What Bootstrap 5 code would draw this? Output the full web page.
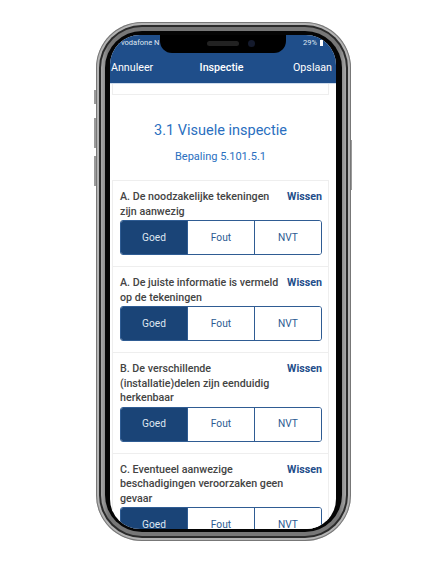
<!DOCTYPE html>
<html lang="nl">
<head>
<meta charset="utf-8">
<title>Inspectie</title>
<link href="https://cdn.jsdelivr.net/npm/bootstrap@5.3.0/dist/css/bootstrap.min.css" rel="stylesheet">
<style>
html,body{height:100%;background:#fff;overflow:hidden}
body{font-family:Roboto,"Liberation Sans",sans-serif}
.stage{width:433px;height:577px;padding:22px 0 0 96px}
.phone-shell{width:255px;height:519px;border-radius:46px;padding:3px;background:#b4b4b4;box-shadow:inset 0 0 0 1px #777;position:relative}
.ring-dark{width:100%;height:100%;border-radius:43px;background:#2b2b2b;padding:2px}
.ring-gray{width:100%;height:100%;border-radius:41px;background:linear-gradient(90deg,#a8a8a8,#777 3%,#777 97%,#a8a8a8);padding:4px}
.phone-inner{width:100%;height:100%;border-radius:37px;background:#050505;padding:4px 6px 3px 5px}
.phone-screen{width:100%;height:100%;border-radius:30px;background:#fff;overflow:hidden;position:relative}
.side-key{position:absolute;width:2px;background:#9a9a9a}
.key-a{left:-2px;top:68px;height:14px}.key-b{left:-2px;top:96px;height:30px}.key-c{left:-2px;top:134px;height:30px}
.key-d{right:-1px;width:1px;top:118px;height:50px}
.notch{position:absolute;top:0;left:50px;width:126px;height:18px;background:#000;border-radius:0 0 12px 12px;z-index:3}
.notch-speaker{position:absolute;top:6px;left:47px;width:32px;height:5px;border-radius:3px;background:#222}
.notch-cam{position:absolute;top:5px;left:88px;width:7px;height:7px;border-radius:50%;background:#141a2c}
.app-bar{background:#1f4e8a;color:#fff;height:49px;border-bottom:1px solid #cfdcec}
.status-row{height:15px;font-size:7.5px;padding:0 13px 0 6px;color:#dfe7f1}
.signal-mark{display:inline-block;width:3px;height:3px;background:#9fb6d3;margin-right:2px}
.battery-box{display:inline-block;width:3px;height:6px;background:#fff;margin-left:3px}
.title-row{height:33px;font-size:10.7px;padding:4px 4px 0 1px}
.title-row strong{font-weight:500}
.bar-side{flex:1 1 0}
.screen-body{padding:0 7px 0 2px;color:#444}
.stub-card{height:11px;border:1px solid #eee;border-top:0}
.heading-block{height:85px;color:#2a6fc0;text-align:center;padding-top:25px}
.heading-block h1{font-size:14.5px;font-weight:400;line-height:21px;margin:0 0 8px}
.heading-block p{font-size:11px;line-height:15px;margin:0}
.q-card{border:1px solid #eee;border-bottom:0;padding:9px 6px 11px 7px}
.q-head{display:flex;justify-content:space-between;gap:1px;font-size:10.7px;line-height:14.5px;font-weight:500;margin-bottom:1px}
.q-head span{color:#444}
.q-head a{color:#1f4e8a;text-decoration:none;font-weight:700;flex:none}
.seg{display:flex;height:35px;border:1px solid #2f5c93;border-radius:3px;overflow:hidden}
.seg-opt{flex:1;display:flex;align-items:center;justify-content:center;font-size:10.2px;color:#2c5a92;border-left:1px solid #2f5c93;background:#fff}
.seg-opt:first-child{border-left:0}
.seg-on{background:#1a4477;color:#dfe7f1}
</style>
</head>
<body>
<div class="stage">
  <div class="phone-shell">
    <div class="side-key key-a"></div><div class="side-key key-b"></div><div class="side-key key-c"></div><div class="side-key key-d"></div>
    <div class="ring-dark"><div class="ring-gray"><div class="phone-inner"><div class="phone-screen">
      <div class="notch"><div class="notch-speaker"></div><div class="notch-cam"></div></div>
      <div class="app-bar">
        <div class="status-row d-flex justify-content-between align-items-center">
          <span class="d-flex align-items-center"><i class="signal-mark"></i>vodafone N</span><span class="d-flex align-items-center">29%<i class="battery-box"></i></span>
        </div>
        <div class="title-row d-flex align-items-center">
          <span class="bar-side">Annuleer</span><strong>Inspectie</strong><span class="bar-side text-end">Opslaan</span>
        </div>
      </div>
      <div class="screen-body">
        <div class="stub-card"></div>
        <div class="heading-block">
          <h1>3.1 Visuele inspectie</h1>
          <p>Bepaling 5.101.5.1</p>
        </div>
        <div class="q-card">
          <div class="q-head"><span>A. De noodzakelijke tekeningen zijn aanwezig</span><a href="#">Wissen</a></div>
          <div class="seg"><div class="seg-opt seg-on">Goed</div><div class="seg-opt">Fout</div><div class="seg-opt">NVT</div></div>
        </div>
        <div class="q-card">
          <div class="q-head"><span>A. De juiste informatie is vermeld op de tekeningen</span><a href="#">Wissen</a></div>
          <div class="seg"><div class="seg-opt seg-on">Goed</div><div class="seg-opt">Fout</div><div class="seg-opt">NVT</div></div>
        </div>
        <div class="q-card">
          <div class="q-head"><span>B. De verschillende (installatie)delen zijn eenduidig herkenbaar</span><a href="#">Wissen</a></div>
          <div class="seg"><div class="seg-opt seg-on">Goed</div><div class="seg-opt">Fout</div><div class="seg-opt">NVT</div></div>
        </div>
        <div class="q-card">
          <div class="q-head"><span>C. Eventueel aanwezige beschadigingen veroorzaken geen gevaar</span><a href="#">Wissen</a></div>
          <div class="seg"><div class="seg-opt seg-on">Goed</div><div class="seg-opt">Fout</div><div class="seg-opt">NVT</div></div>
        </div>
      </div>
    </div></div></div></div>
  </div>
</div>
<script src="https://cdn.jsdelivr.net/npm/bootstrap@5.3.0/dist/js/bootstrap.bundle.min.js"></script>
</body>
</html>
